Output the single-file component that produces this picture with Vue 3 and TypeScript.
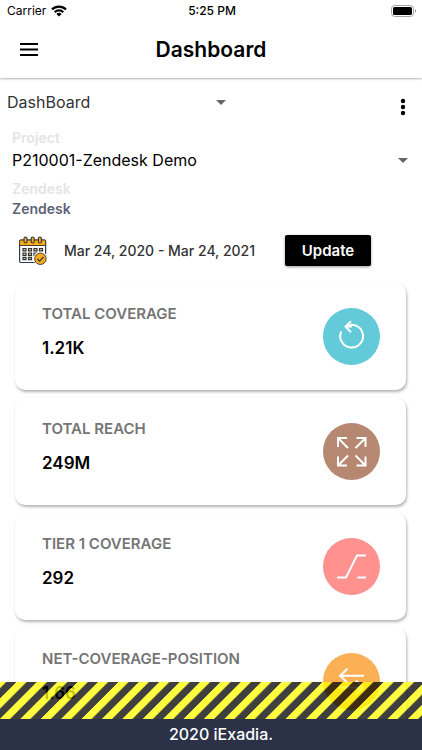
<script setup lang="ts">
import { ref } from 'vue'

type Icon = 'refresh' | 'expand' | 'slope' | 'swap'

interface Metric {
  title: string
  value: string
  icon: Icon
}

const view = ref('DashBoard')
const project = ref('P210001-Zendesk Demo')
const client = ref('Zendesk')

const metrics: Metric[] = [
  { title: 'TOTAL COVERAGE', value: '1.21K', icon: 'refresh' },
  { title: 'TOTAL REACH', value: '249M', icon: 'expand' },
  { title: 'TIER 1 COVERAGE', value: '292', icon: 'slope' },
  { title: 'NET-COVERAGE-POSITION', value: '1.66', icon: 'swap' },
]
</script>

<template>
  <div class="screen">
    <div class="status">
      <div class="carrier">
        <span>Carrier</span>
        <svg width="16" height="12" viewBox="0 0 16 12" aria-hidden="true">
          <g fill="none" stroke="#000" stroke-width="2.2">
            <path d="M1 4.4a10 10 0 0 1 14 0" />
            <path d="M3.7 7.2a6.2 6.2 0 0 1 8.6 0" />
          </g>
          <path d="M8 11.6 5.4 9a3.8 3.8 0 0 1 5.2 0z" />
        </svg>
      </div>
      <span class="time">5:25 PM</span>
      <svg class="battery" width="26" height="12" viewBox="0 0 26 12" aria-hidden="true">
        <rect x="0.5" y="0.5" width="22" height="11" rx="3.2" fill="#fff" stroke="#a3a3a3" />
        <rect x="2" y="2" width="19" height="8" rx="1.6" />
        <path d="M24 4.2c1.4.5 1.4 3.1 0 3.6z" fill="#8c8c8c" />
      </svg>
    </div>

    <header class="bar">
      <button class="icon-btn menu" type="button" aria-label="Menu">
        <svg width="18" height="13" viewBox="0 0 18 13"><path d="M0 1h18M0 6.5h18M0 12h18" stroke="#000" stroke-width="2" /></svg>
      </button>
      <h1>Dashboard</h1>
      <span></span>
    </header>

    <main class="content">
      <div class="view-row">
        <div class="picker view">
          <select v-model="view" aria-label="View">
            <option>DashBoard</option>
          </select>
          <svg width="10" height="5" viewBox="0 0 10 5" aria-hidden="true"><path d="M0 0h10L5 5z" fill="#666" /></svg>
        </div>
        <button class="icon-btn" type="button" aria-label="More options">
          <svg width="6" height="18" viewBox="0 0 6 18"><circle cx="3" cy="3" r="2.2" /><circle cx="3" cy="9" r="2.2" /><circle cx="3" cy="15" r="2.2" /></svg>
        </button>
      </div>

      <div class="fields">
        <label class="small" for="project">Project</label>
        <div class="picker project">
          <select id="project" v-model="project">
            <option>P210001-Zendesk Demo</option>
          </select>
          <svg width="10" height="5" viewBox="0 0 10 5" aria-hidden="true"><path d="M0 0h10L5 5z" fill="#666" /></svg>
        </div>
        <label class="caption" for="client">Zendesk</label>
        <input id="client" v-model="client" type="text" readonly />
      </div>

      <div class="dates">
        <button class="icon-btn" type="button" aria-label="Choose dates">
          <svg width="30" height="30" viewBox="0 0 30 30">
            <rect x="1.6" y="4" width="26" height="22.5" rx="1.2" fill="#fff" stroke="#303a52" stroke-width="1.2" />
            <path d="M1.6 9.5V5.2Q1.6 4 2.8 4h23.6q1.2 0 1.2 1.2v4.3z" fill="#f6ad1b" stroke="#4b4130" stroke-width="1" />
            <g fill="#f6ad1b" stroke="#303340" stroke-width="1.1">
              <rect x="6" y="1" width="3" height="6" rx="1.5" />
              <rect x="13.2" y="1" width="3" height="6" rx="1.5" />
              <rect x="20.4" y="1" width="3" height="6" rx="1.5" />
            </g>
            <g fill="#f8d47b" stroke="#2d3037" stroke-width="1.2">
              <path d="M5 12.5h3v2.4H5zM10.5 12.5h3v2.4h-3zM16 12.5h3v2.4h-3zM21.5 12.5h3v2.4h-3zM5 17h3v2.4H5zM10.5 17h3v2.4h-3zM16 17h3v2.4h-3zM5 21.3h3v2.4H5zM10.5 21.3h3v2.4h-3z" />
            </g>
            <circle cx="22.4" cy="22.8" r="7" fill="#fff" />
            <circle cx="22.4" cy="22.8" r="5.7" fill="#f6ad1b" stroke="#4b4130" stroke-width="1" />
            <path d="m19.4 23 2.2 2.1 4-4.2" fill="none" stroke="#303340" stroke-width="1.3" />
          </svg>
        </button>
        <span class="range">Mar 24, 2020 - Mar 24, 2021</span>
        <button class="update" type="button">Update</button>
      </div>

      <section class="cards">
        <article v-for="m in metrics" :key="m.title" class="card">
          <div class="text">
            <h2>{{ m.title }}</h2>
            <p>{{ m.value }}</p>
          </div>
          <div class="badge" :class="m.icon">
            <svg width="57" height="57" viewBox="0 0 57 57" fill="none" stroke="#fff" stroke-width="2" aria-hidden="true">
              <path v-if="m.icon === 'refresh'" d="M18.3 23.4A11.4 11.4 0 1 0 22.5 18.6M22.5 18.6H29M28 13.2l-5.5 5.4 5.5 5.6" />
              <path v-else-if="m.icon === 'expand'" d="M25 25 15 15M15 24v-9h9M32.5 25l10-10M33.5 15h9v9M25 32.5l-10 10M15 33.5v9h9M32.5 32.5l10 10M42.5 33.5v9h-9" />
              <path v-else-if="m.icon === 'slope'" d="M14 39.5h9L34 17.5h9M34.5 39.5h8.5" />
              <path v-else d="M41 22.8H17M24.5 15.8l-7.5 7 7.5 7M16 34.5h24M33 27.5l7 7-7 7" />
            </svg>
          </div>
        </article>
      </section>

      <svg class="stripes" aria-hidden="true">
        <defs>
          <pattern id="hazard" x="16.4" width="20.4" height="40" patternUnits="userSpaceOnUse" patternTransform="skewX(-45)">
            <rect width="20.4" height="40" fill="#000" />
            <rect width="10.2" height="40" fill="#ff0" />
          </pattern>
        </defs>
        <rect width="100%" height="100%" fill="url(#hazard)" />
      </svg>
    </main>

    <footer class="foot">2020 iExadia.</footer>
  </div>
</template>

<style>
body {
  background: #fff;
}
</style>

<style scoped>
* {
  box-sizing: border-box;
}
.screen {
  display: flex;
  flex-direction: column;
  height: 100vh;
  font-family: Inter, 'Liberation Sans', sans-serif;
  color: #000;
}
svg {
  display: block;
}
h1,
h2,
p {
  margin: 0;
}
.status,
.bar {
  display: grid;
  grid-template-columns: 1fr auto 1fr;
  align-items: center;
}
.status {
  position: relative;
  z-index: 1;
  height: 21px;
  padding: 0 5px 0 7px;
  background: #fff;
  font-size: 12px;
}
.carrier {
  display: flex;
  align-items: center;
  gap: 5px;
}
.time {
  font-weight: 500;
}
.battery {
  justify-self: end;
}
.bar {
  height: 57px;
  padding: 0 16px;
  box-shadow: 0 1px 2px rgba(0, 0, 0, 0.3);
  clip-path: inset(0 0 -6px);
}
h1 {
  font-size: 21px;
  line-height: 24px;
  font-weight: 600;
}
.icon-btn {
  padding: 0;
  border: 0;
  background: none;
  cursor: pointer;
}
.menu {
  justify-self: start;
  padding: 4px;
}
.content {
  position: relative;
  flex: 1;
  min-height: 0;
  overflow: hidden;
  margin-top: 4px;
  padding-top: 8px;
}
.view-row {
  display: flex;
  justify-content: space-between;
  align-items: center;
  height: 34px;
  padding: 0 16px 0 7px;
}
.picker {
  display: grid;
  align-items: center;
}
.picker > * {
  grid-area: 1 / 1;
}
.picker svg {
  justify-self: end;
  pointer-events: none;
}
.view {
  width: 55%;
  margin-bottom: 10px;
}
select,
input {
  appearance: none;
  width: 100%;
  padding: 0;
  border: 0;
  background: none;
  font-family: inherit;
  font-size: 16px;
  line-height: 20px;
  height: 20px;
  color: #000;
}
.view select {
  color: #333;
}
.fields {
  display: flex;
  flex-direction: column;
  padding: 6px 14px 0 12px;
}
label {
  color: #e4e4e7;
  font-weight: 600;
}
.small {
  font-size: 14px;
  line-height: 16px;
}
.project {
  padding-top: 4px;
}
.caption {
  padding-top: 9px;
  font-size: 14px;
  line-height: 20px;
}
input {
  font-size: 14px;
  font-weight: 600;
  color: #5c6274;
}
.dates {
  display: flex;
  align-items: center;
  height: 31px;
  margin-top: 16px;
  padding-left: 18px;
}
.range {
  margin-left: 16px;
  font-size: 14px;
  font-weight: 500;
  color: #333;
}
.update {
  width: 86px;
  height: 31px;
  margin-left: 30px;
  padding: 0;
  border: 0;
  border-radius: 2px;
  background: #000;
  color: #fff;
  font-family: inherit;
  font-size: 15px;
  font-weight: 600;
  box-shadow: 0 1px 3px rgba(0, 0, 0, 0.4);
}
.cards {
  display: grid;
  gap: 8px;
  padding: 17px 16px 0 15px;
}
.card {
  display: flex;
  justify-content: space-between;
  align-items: center;
  height: 107px;
  padding: 0 26px 0 27px;
  border-radius: 10px;
  background: #fff;
  box-shadow: 1px 2px 3px rgba(0, 0, 0, 0.3);
}
.text {
  display: flex;
  flex-direction: column;
  gap: 14px;
  padding-bottom: 12px;
}
h2 {
  font-size: 15px;
  line-height: 20px;
  font-weight: 600;
  color: #757575;
}
p {
  font-size: 17px;
  line-height: 20px;
  font-weight: 600;
}
.badge {
  border-radius: 50%;
}
.refresh {
  background: #62cad8;
}
.expand {
  background: #b68871;
}
.slope {
  background: #ff918f;
}
.swap {
  background: #fbb056;
}
.stripes {
  position: absolute;
  left: 0;
  bottom: 0;
  width: 100%;
  height: 37px;
  opacity: 0.75;
}
.foot {
  height: 31px;
  padding-left: 20px;
  background: #2b3247;
  color: #fff;
  text-align: center;
  font-size: 16px;
  line-height: 31px;
  font-weight: 500;
}
</style>
